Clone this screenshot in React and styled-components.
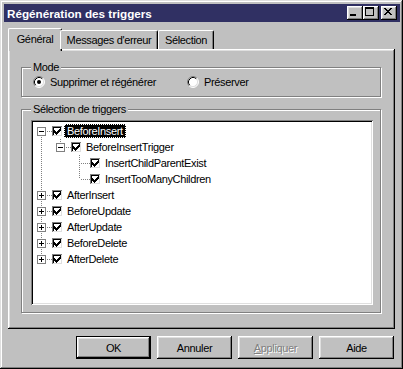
import React from 'react';
import styled, { createGlobalStyle } from 'styled-components';

const colors = {
  face: '#c0c0c0',
  light: '#dfdfdf',
  white: '#ffffff',
  shadow: '#808080',
  dark: '#000000',
  title: '#303063',
};

const raised = `
  box-shadow: inset -1px -1px ${colors.dark}, inset 1px 1px ${colors.white},
    inset -2px -2px ${colors.shadow}, inset 2px 2px ${colors.light};
`;

const GlobalStyle = createGlobalStyle`
  html, body {
    margin: 0;
    padding: 0;
    background: ${colors.face};
  }
  body {
    font-family: "Liberation Sans", Arial, sans-serif;
    font-size: 11px;
    letter-spacing: -0.35px;
    color: #000;
  }
  * {
    box-sizing: border-box;
  }
`;

const Window = styled.div`
  width: 403px;
  height: 369px;
  display: flex;
  flex-direction: column;
  padding: 4px 3px 3px 4px;
  background: ${colors.face};
  box-shadow: inset -1px -1px ${colors.dark}, inset 1px 1px ${colors.light},
    inset -2px -2px ${colors.shadow}, inset 2px 2px ${colors.white};
`;

const TitleBar = styled.div`
  height: 18px;
  display: flex;
  align-items: center;
  padding: 0 3px 0 3px;
  background: ${colors.title};
`;

const Title = styled.span`
  flex: 1;
  color: ${colors.white};
  font-weight: bold;
  font-size: 11.7px;
  letter-spacing: 0;
  white-space: nowrap;
`;

const CaptionButton = styled.div`
  width: 16px;
  height: 14px;
  margin-left: ${(p) => p.$gap || 0}px;
  background: ${colors.face};
  ${raised};
  svg {
    display: block;
  }
`;

const Body = styled.div`
  flex: 1;
  display: flex;
  flex-direction: column;
  padding: 6px 5px 0 4px;
`;

const TabStrip = styled.div`
  position: relative;
  z-index: 1;
  display: flex;
  align-items: flex-end;
  height: 21px;
  padding-left: 2px;
`;

const Tab = styled.div`
  width: ${(p) => p.$w + (p.$active ? 4 : 0)}px;
  height: ${(p) => (p.$active ? 23 : 19)}px;
  margin: 0 ${(p) => (p.$active ? -2 : 0)}px ${(p) => (p.$active ? -2 : 0)}px;
  display: flex;
  align-items: center;
  justify-content: center;
  padding-bottom: ${(p) => (p.$active ? 3 : 0)}px;
  background: ${colors.face};
  border-top: 1px solid ${colors.white};
  border-left: 1px solid ${colors.white};
  border-right: 1px solid ${colors.dark};
  border-radius: 2px 2px 0 0;
  box-shadow: inset -1px 0 ${colors.shadow};
  white-space: nowrap;
`;

const TabPanel = styled.div`
  padding: 12px 14px 16px 13px;
  background: ${colors.face};
  ${raised};
`;

const Group = styled.fieldset`
  margin: ${(p) => p.$top || 0}px 0 0;
  padding: ${(p) => p.$pad};
  min-width: 0;
  border: 1px solid ${colors.shadow};
  box-shadow: inset 1px 1px ${colors.white}, 1px 1px ${colors.white};
`;

const Legend = styled.legend`
  padding: 0 2px;
  line-height: 13px;
  background: ${colors.face};
`;

const RadioRow = styled.div`
  display: flex;
  align-items: center;
  height: 13px;
  padding-left: 2px;
`;

const RadioOption = styled.label`
  display: flex;
  align-items: center;
  gap: 5px;
  width: ${(p) => (p.$w ? `${p.$w}px` : 'auto')};
  svg {
    flex: none;
  }
`;

const TreeBox = styled.div`
  height: 185px;
  padding-top: 1px;
  background: ${colors.white};
  box-shadow: inset 1px 1px ${colors.shadow}, inset -1px -1px ${colors.white},
    inset 2px 2px ${colors.dark}, inset -2px -2px ${colors.light};
  padding-left: 2px;
  padding-top: 3px;
  overflow: hidden;
`;

const TreeRow = styled.div`
  display: flex;
  align-items: center;
  height: 16px;
  svg {
    flex: none;
    display: block;
  }
`;

const NodeLabel = styled.span`
  margin-left: 1px;
  padding: 0 2px;
  height: 14px;
  line-height: 12px;
  white-space: nowrap;
  border: 1px dotted ${(p) => (p.$selected ? colors.white : 'transparent')};
  background: ${(p) => (p.$selected ? colors.dark : 'transparent')};
  color: ${(p) => (p.$selected ? colors.white : colors.dark)};
`;

const ButtonRow = styled.div`
  display: flex;
  justify-content: flex-end;
  gap: 6px;
  margin-top: 7px;
  padding-right: 1px;
`;

const Button = styled.div`
  width: 75px;
  height: 23px;
  display: flex;
  align-items: center;
  justify-content: center;
  background: ${colors.face};
  border: ${(p) => (p.$default ? `1px solid ${colors.dark}` : 'none')};
  ${raised};
  color: ${(p) => (p.$disabled ? colors.shadow : colors.dark)};
  text-shadow: ${(p) => (p.$disabled ? `1px 1px 0 ${colors.white}` : 'none')};
`;

const MinimizeIcon = () => (
  <svg width="14" height="12" viewBox="0 0 14 12" shapeRendering="crispEdges">
    <path d="M3 8h6v2H3z" fill="#000" />
  </svg>
);

const MaximizeIcon = () => (
  <svg width="14" height="12" viewBox="0 0 14 12" shapeRendering="crispEdges">
    <path d="M2 1h9v2H2z M2 3h1v6H2z M10 3h1v6h-1z M2 9h9v1H2z" fill="#000" />
  </svg>
);

const CloseIcon = () => (
  <svg width="14" height="12" viewBox="0 0 14 12" shapeRendering="crispEdges">
    <path
      d="M3 2h2v1H3z M9 2h2v1H9z M4 3h2v1H4z M8 3h2v1H8z M5 4h4v1H5z M6 5h2v1H6z M5 6h4v1H5z M4 7h2v1H4z M8 7h2v1H8z M3 8h2v1H3z M9 8h2v1H9z"
      fill="#000"
    />
  </svg>
);

const Radio = ({ checked }) => (
  <svg width="12" height="12" viewBox="0 0 12 12">
    <circle cx="6" cy="6" r="5" fill="#fff" />
    <path d="M2.11 9.89 A5.5 5.5 0 0 1 9.89 2.11" fill="none" stroke={colors.shadow} />
    <path d="M9.89 2.11 A5.5 5.5 0 0 1 2.11 9.89" fill="none" stroke={colors.white} />
    <path d="M2.82 9.18 A4.5 4.5 0 0 1 9.18 2.82" fill="none" stroke={colors.dark} />
    <path d="M9.18 2.82 A4.5 4.5 0 0 1 2.82 9.18" fill="none" stroke={colors.light} />
    {checked && <circle cx="6" cy="6" r="2" fill="#000" />}
  </svg>
);

const CheckBox = () => (
  <svg width="11" height="11" viewBox="0 0 11 11" shapeRendering="crispEdges">
    <path d="M0 0h10v1H1v9H0z" fill={colors.shadow} />
    <path d="M10 0h1v11H0v-1h10z" fill={colors.white} />
    <path d="M1 1h8v1H2v7H1z" fill={colors.dark} />
    <path d="M9 1h1v9H1v-1h8z" fill={colors.light} />
    <rect x="2" y="2" width="7" height="7" fill="#fff" />
    <path
      d="M8 2h1v1H8z M7 3h2v1H7z M2 4h1v1H2z M6 4h3v1H6z M2 5h2v1H2z M5 5h3v1H5z M2 6h5v1H2z M3 7h3v1H3z M4 8h1v1H4z"
      fill="#000"
    />
  </svg>
);

const dots = { stroke: colors.shadow, strokeWidth: 1, strokeDasharray: '1 1', fill: 'none' };

const Branch = ({ up, down, across = true, box, guide }) => (
  <svg width="19" height="16" viewBox="0 0 19 16" shapeRendering="crispEdges">
    {guide && <line x1="8.5" y1="0" x2="8.5" y2="16" {...dots} />}
    {up && <line x1="8.5" y1="0" x2="8.5" y2="8" {...dots} />}
    {down && <line x1="8.5" y1="8" x2="8.5" y2="16" {...dots} />}
    {across && <line x1={box ? 14 : 10} y1="8.5" x2="19" y2="8.5" {...dots} />}
    {box && (
      <g>
        <rect x="4.5" y="4.5" width="8" height="8" fill="#fff" stroke={colors.shadow} />
        <path d="M6 8h5v1H6z" fill="#000" />
        {box === 'plus' && <path d="M8 6h1v5H8z" fill="#000" />}
      </g>
    )}
  </svg>
);

const nodes = [
  { label: 'BeforeInsert', guides: [], up: false, down: true, box: 'minus', selected: true },
  { label: 'BeforeInsertTrigger', guides: [true], up: true, down: false, box: 'minus' },
  { label: 'InsertChildParentExist', guides: [true, false], up: true, down: true },
  { label: 'InsertTooManyChildren', guides: [true, false], up: true, down: false },
  { label: 'AfterInsert', guides: [], up: true, down: true, box: 'plus' },
  { label: 'BeforeUpdate', guides: [], up: true, down: true, box: 'plus' },
  { label: 'AfterUpdate', guides: [], up: true, down: true, box: 'plus' },
  { label: 'BeforeDelete', guides: [], up: true, down: true, box: 'plus' },
  { label: 'AfterDelete', guides: [], up: true, down: false, box: 'plus' },
];

const tabs = [
  { label: 'Général', w: 50, active: true },
  { label: "Messages d'erreur", w: 98 },
  { label: 'Sélection', w: 56 },
];

const App = () => {
  return (
    <>
      <GlobalStyle />
      <Window>
        <TitleBar>
          <Title>Régénération des triggers</Title>
          <CaptionButton><MinimizeIcon /></CaptionButton>
          <CaptionButton><MaximizeIcon /></CaptionButton>
          <CaptionButton $gap={2}><CloseIcon /></CaptionButton>
        </TitleBar>
        <Body>
          <TabStrip>
            {tabs.map((t) => (
              <Tab key={t.label} $w={t.w} $active={t.active}>{t.label}</Tab>
            ))}
          </TabStrip>
          <TabPanel>
            <Group $pad="1px 6px 8px 9px">
              <Legend>Mode</Legend>
              <RadioRow>
                <RadioOption $w={154}><Radio checked />Supprimer et régénérer</RadioOption>
                <RadioOption><Radio />Préserver</RadioOption>
              </RadioRow>
            </Group>
            <Group $top={6} $pad="4px 7px 7px 9px">
              <Legend>Sélection de triggers</Legend>
              <TreeBox>
                {nodes.map((n) => (
                  <TreeRow key={n.label}>
                    {n.guides.map((g, i) => (
                      <Branch key={i} guide={g} across={false} />
                    ))}
                    <Branch up={n.up} down={n.down} box={n.box} />
                    <CheckBox />
                    <NodeLabel $selected={n.selected}>{n.label}</NodeLabel>
                  </TreeRow>
                ))}
              </TreeBox>
            </Group>
          </TabPanel>
          <ButtonRow>
            <Button $default>OK</Button>
            <Button>Annuler</Button>
            <Button $disabled><span><u>A</u>ppliquer</span></Button>
            <Button>Aide</Button>
          </ButtonRow>
        </Body>
      </Window>
    </>
  );
};

export default App;
